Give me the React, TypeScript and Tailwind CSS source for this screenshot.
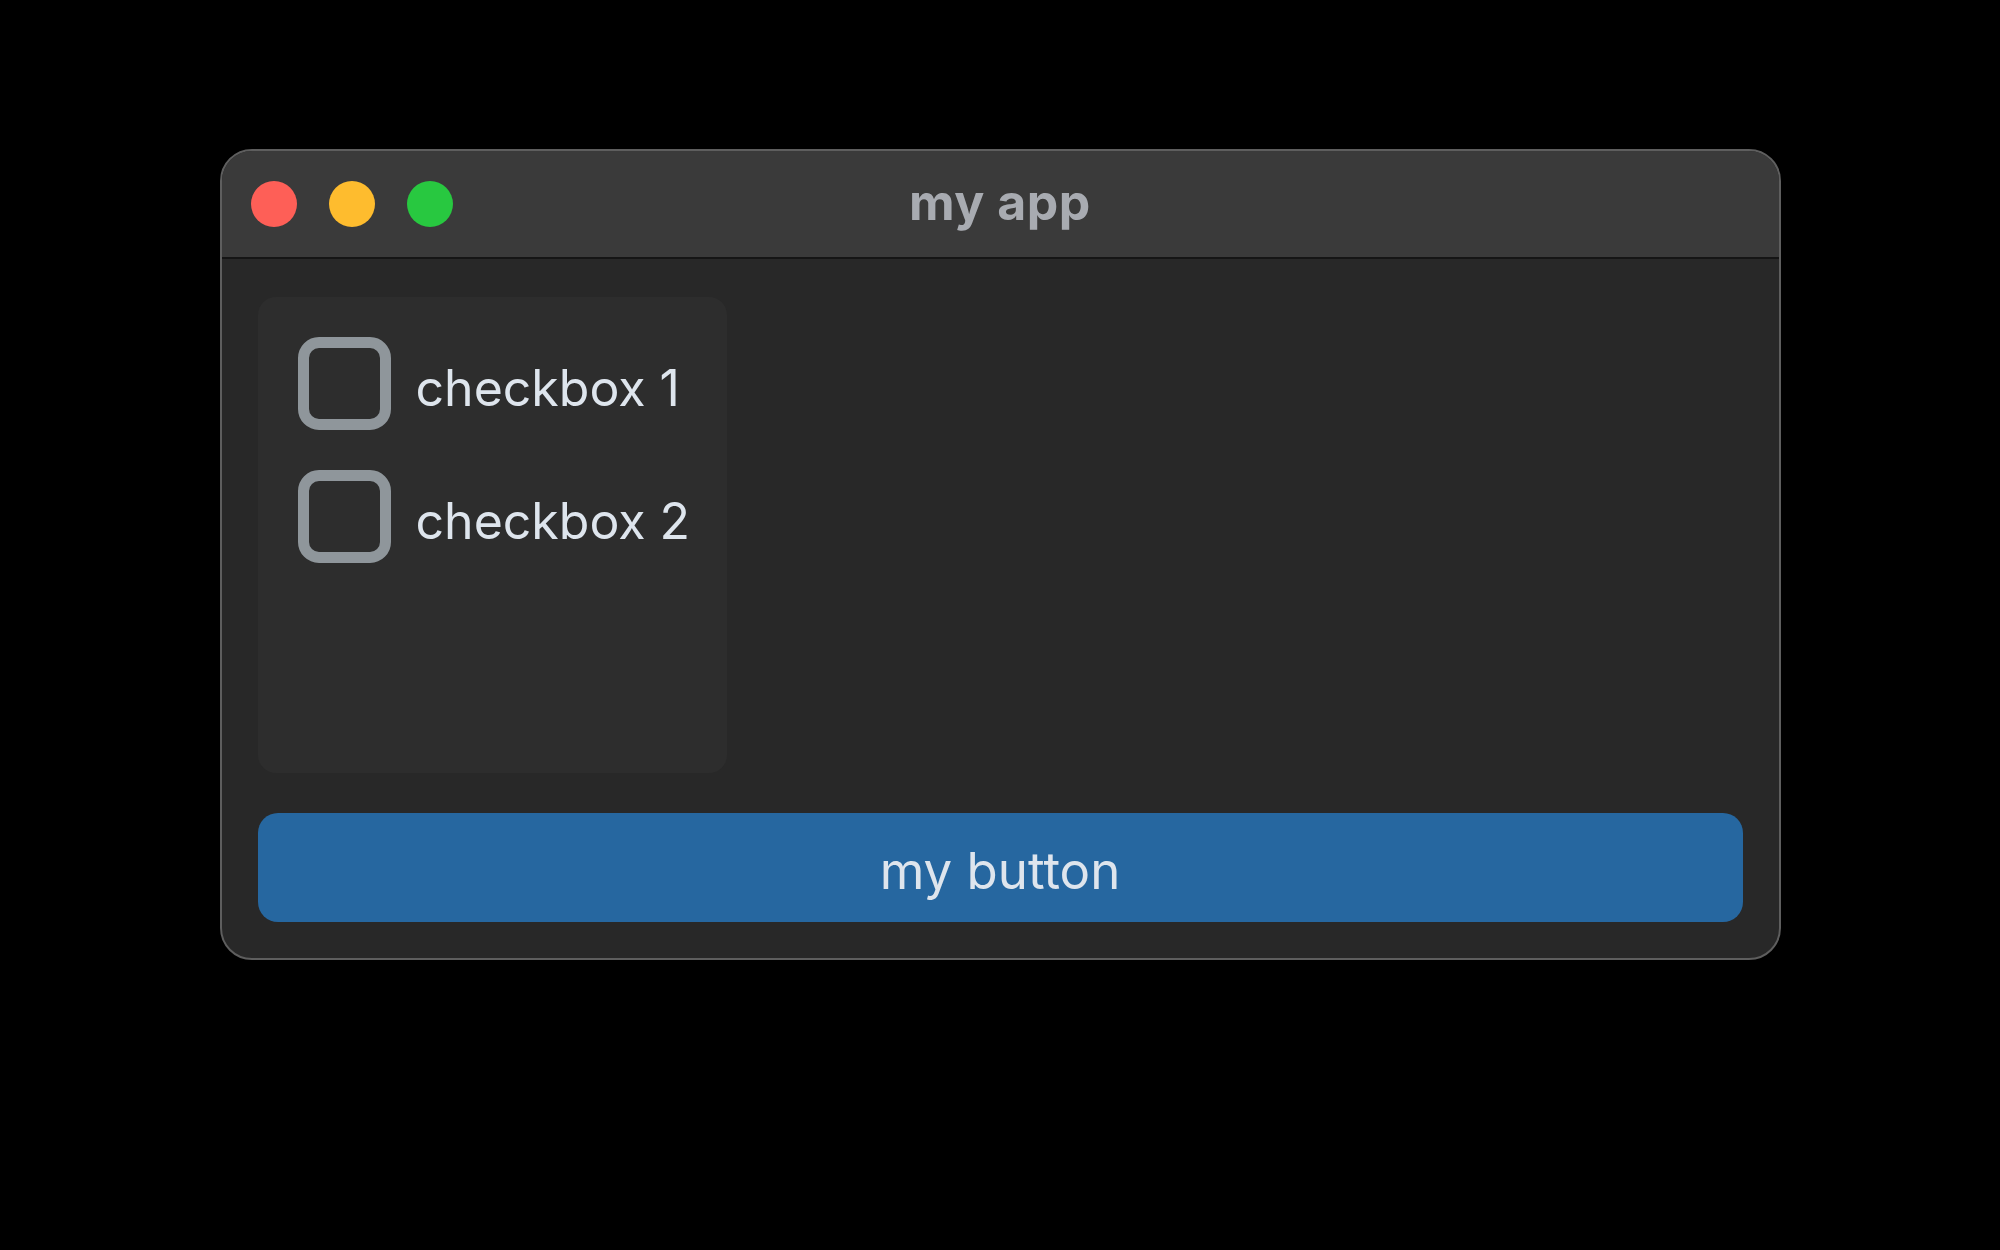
import React from "react";

const Checkbox: React.FC<{ label: string }> = ({ label }) => {
    return (
        <label className="flex items-center gap-[25px]">
            <span className="w-[93px] h-[93px] shrink-0 rounded-[21px] border-[11px] border-[#8f969b]" />
            <span className="text-[50px] leading-none text-[#dee5ed] pt-[9px] whitespace-nowrap">
                {label}
            </span>
        </label>
    );
};

export default function App() {
    return (
        <div
            className="w-[2000px] h-[1250px] bg-black flex justify-center pt-[149px]"
            style={{ fontFamily: "Inter, 'Noto Sans', sans-serif" }}
        >
            <div className="w-[1561px] h-[811px] flex flex-col rounded-[32px] border-2 border-[#5e5e5e] bg-[#282828] overflow-hidden">
                {/* title bar */}
                <div className="h-[108px] shrink-0 grid grid-cols-[1fr_auto_1fr] items-center bg-[#3a3a3a] border-b-2 border-[#151515] px-[29px]">
                    <div className="flex items-center gap-[32px]">
                        <span className="w-[46px] h-[46px] rounded-full bg-[#fe5f57]" />
                        <span className="w-[46px] h-[46px] rounded-full bg-[#febc2e]" />
                        <span className="w-[46px] h-[46px] rounded-full bg-[#28c840]" />
                    </div>
                    <div className="text-[50px] font-bold text-[#a8abb1] leading-none pb-[4px] tracking-[0.5px]">
                        my app
                    </div>
                    <div />
                </div>

                <div className="flex-1 flex flex-col gap-[40px] px-[36px] pt-[38px] pb-[36px]">
                    <div className="w-[469px] h-[476px] rounded-[18px] bg-[#2d2d2d] p-[40px] flex flex-col gap-[40px]">
                        <Checkbox label="checkbox 1" />
                        <Checkbox label="checkbox 2" />
                    </div>
                    <button
                        type="button"
                        className="h-[109px] w-full rounded-[20px] bg-[#2667a0] text-[51px] text-[#dee5ed] leading-none pt-[5px]"
                    >
                        my button
                    </button>
                </div>
            </div>
        </div>
    );
}
